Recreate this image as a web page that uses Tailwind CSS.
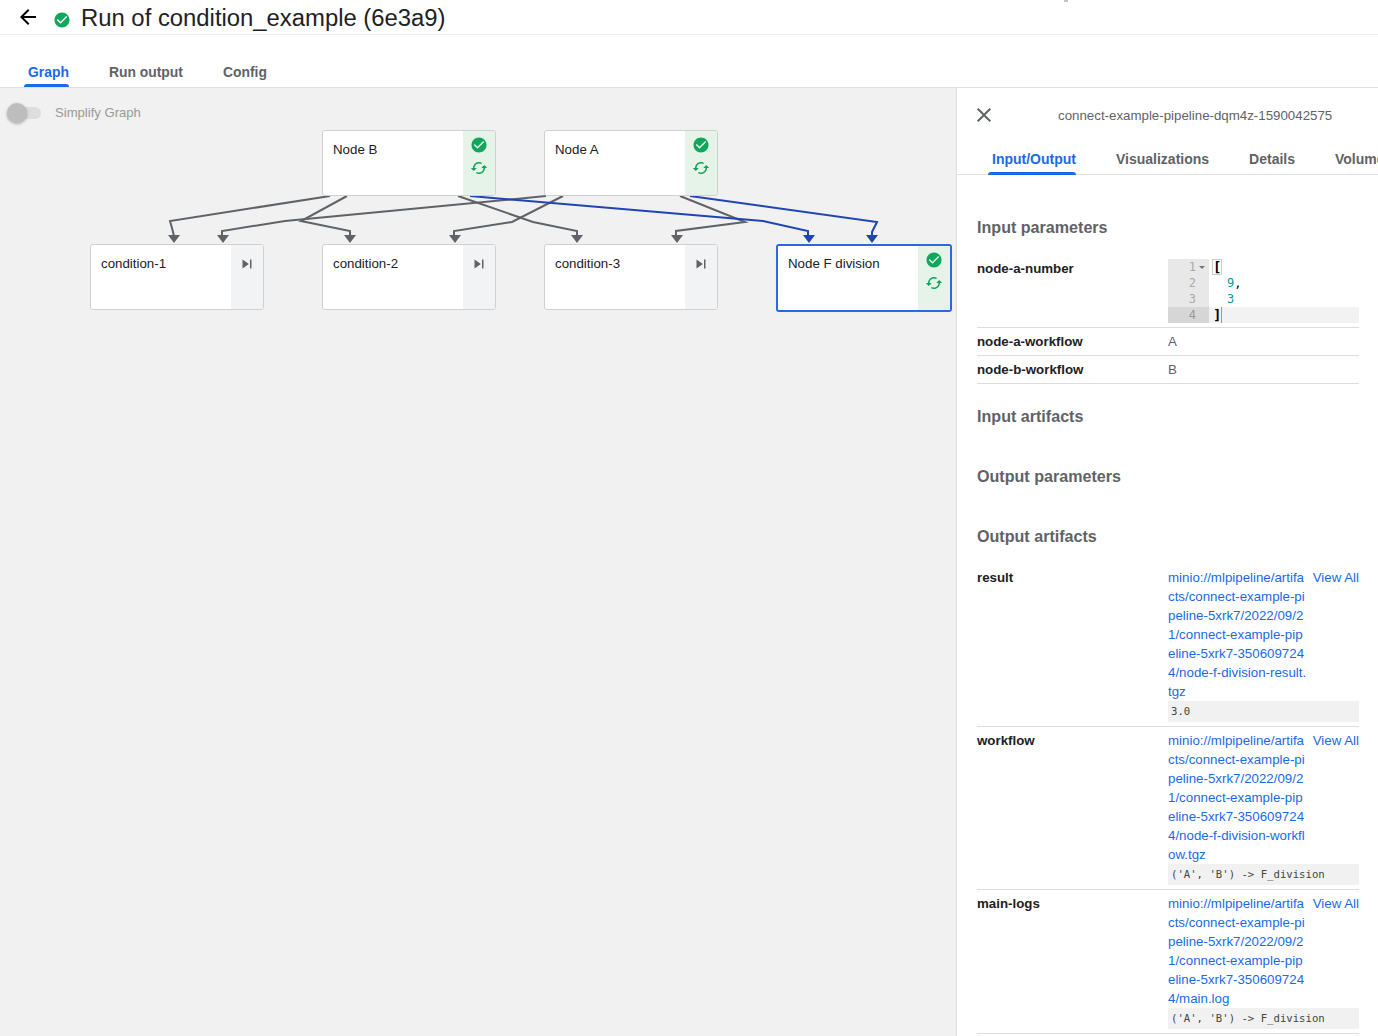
<!DOCTYPE html>
<html lang="en">

<head>
  <meta charset="UTF-8" />
  <title>Run of condition_example (6e3a9)</title>
  <script src="https://cdn.jsdelivr.net/npm/@tailwindcss/browser@4"></script>
</head>

<body class="relative h-[1036px] overflow-hidden bg-white font-['Liberation_Sans',Arial,sans-serif] text-[13.3px] text-[#202124]">

  <!-- sliver of something cut off by the top of the window -->
  <span class="absolute left-[1064px] top-0 h-[2px] w-1 bg-[#c4c4c4]"></span>

  <!-- page title -->
  <div class="flex h-[35px] items-center border-b border-[#eeeeee]">
    <svg class="ml-4 h-6 w-6 text-black" viewBox="0 0 24 24" fill="currentColor"><path d="M20 11H7.83l5.59-5.59L12 4l-8 8 8 8 1.41-1.41L7.83 13H20v-2z"/></svg>
    <svg class="ml-[13px] mt-[5px] h-[18px] w-[18px] text-[#10a65b]" viewBox="0 0 24 24" fill="currentColor"><path d="M12 2C6.48 2 2 6.48 2 12s4.48 10 10 10 10-4.48 10-10S17.52 2 12 2zm-2 15l-5-5 1.41-1.41L10 14.17l7.59-7.59L19 8l-9 9z"/></svg>
    <h1 class="ml-[10px] mt-[2px] text-[23.85px] leading-8">Run of condition_example (6e3a9)</h1>
  </div>

  <!-- main tabs -->
  <div class="flex h-[53px] items-end gap-10 border-b border-[#e0e0e0] pb-[7px] pl-7 text-[13.9px] font-bold leading-4 text-[#5f6368]">
    <div class="relative text-[#1a6ae8]">Graph<span class="absolute -bottom-[7px] -left-1 right-0 h-[3px] rounded-t-[3px] bg-[#1a6ae8]"></span></div>
    <div>Run output</div>
    <div>Config</div>
  </div>

  <div class="flex h-[948px]">
    <!-- graph canvas -->
    <div class="relative w-[956px] overflow-hidden bg-[#f1f1f1]">
      <div class="flex h-[50px] items-center pb-[1px]">
        <div class="relative ml-[17px] h-[12px] w-[24px] rounded-full bg-[#dddddd]">
          <span class="absolute -left-[10px] -top-[4px] h-5 w-5 rounded-full bg-[#bdbdbd] shadow-[0_1px_3px_rgba(0,0,0,0.3)]"></span>
        </div>
        <span class="ml-[14px] text-[13.1px] text-[#999999]">Simplify Graph</span>
      </div>

      <svg class="absolute left-0 top-0" width="956" height="948" viewBox="0 88 956 948" fill="none" stroke-width="2">
        <g stroke="#5f6368">
          <path d="M330 196L170 221L172 228L174 236"/>
          <path d="M347 196L301 221L350 231V236"/>
          <path d="M546 196L285 221L222 231V236"/>
          <path d="M458 196L533 222L577 231V236"/>
          <path d="M563 196L512 222L454 231V236"/>
          <path d="M680 196L745 222L676 231V236"/>
        </g>
        <g fill="#5f6368">
          <path d="M168 235H180L174 243Z"/>
          <path d="M217 235H229L223 243Z"/>
          <path d="M344 235H356L350 243Z"/>
          <path d="M449 235H461L455 243Z"/>
          <path d="M571 235H583L577 243Z"/>
          <path d="M671 235H683L677 243Z"/>
        </g>
        <g stroke="#1f45b5">
          <path d="M470 196L763 221L808 231V236"/>
          <path d="M690 196L877 222L872 232V236"/>
        </g>
        <g fill="#1f45b5">
          <path d="M803 235H815L809 243Z"/>
          <path d="M866 235H878L872 243Z"/>
        </g>
      </svg>

      <!-- nodes -->
      <div class="absolute left-[322px] top-[42px] flex h-[66px] w-[174px] overflow-hidden rounded-[3px] border border-[#d0d0d0] bg-white">
        <div class="flex-1 pl-[10px] pt-[11px] leading-4">Node B</div>
        <div class="flex w-8 flex-col items-center gap-[5px] bg-[#e5f3e9] pt-[5px] text-[#10a65b]">
          <svg class="h-[18px] w-[18px]" viewBox="0 0 24 24" fill="currentColor"><path d="M12 2C6.48 2 2 6.48 2 12s4.48 10 10 10 10-4.48 10-10S17.52 2 12 2zm-2 15l-5-5 1.41-1.41L10 14.17l7.59-7.59L19 8l-9 9z"/></svg>
          <svg class="h-[18px] w-[18px]" viewBox="0 0 24 24" fill="currentColor"><path d="M19 8l-4 4h3c0 3.31-2.69 6-6 6-1.01 0-1.97-.25-2.8-.7l-1.46 1.46C8.97 19.54 10.43 20 12 20c4.42 0 8-3.58 8-8h3l-4-4zM6 12c0-3.31 2.69-6 6-6 1.01 0 1.97.25 2.8.7l1.46-1.46C15.03 4.46 13.57 4 12 4c-4.42 0-8 3.58-8 8H1l4 4 4-4H6z"/></svg>
        </div>
      </div>
      <div class="absolute left-[544px] top-[42px] flex h-[66px] w-[174px] overflow-hidden rounded-[3px] border border-[#d0d0d0] bg-white">
        <div class="flex-1 pl-[10px] pt-[11px] leading-4">Node A</div>
        <div class="flex w-8 flex-col items-center gap-[5px] bg-[#e5f3e9] pt-[5px] text-[#10a65b]">
          <svg class="h-[18px] w-[18px]" viewBox="0 0 24 24" fill="currentColor"><path d="M12 2C6.48 2 2 6.48 2 12s4.48 10 10 10 10-4.48 10-10S17.52 2 12 2zm-2 15l-5-5 1.41-1.41L10 14.17l7.59-7.59L19 8l-9 9z"/></svg>
          <svg class="h-[18px] w-[18px]" viewBox="0 0 24 24" fill="currentColor"><path d="M19 8l-4 4h3c0 3.31-2.69 6-6 6-1.01 0-1.97-.25-2.8-.7l-1.46 1.46C8.97 19.54 10.43 20 12 20c4.42 0 8-3.58 8-8h3l-4-4zM6 12c0-3.31 2.69-6 6-6 1.01 0 1.97.25 2.8.7l1.46-1.46C15.03 4.46 13.57 4 12 4c-4.42 0-8 3.58-8 8H1l4 4 4-4H6z"/></svg>
        </div>
      </div>
      <div class="absolute left-[90px] top-[156px] flex h-[66px] w-[174px] overflow-hidden rounded-[3px] border border-[#d0d0d0] bg-white">
        <div class="flex-1 pl-[10px] pt-[11px] leading-4">condition-1</div>
        <div class="flex w-8 justify-center bg-[#f1f3f4] pt-[10px] text-[#5f6368]">
          <svg class="h-[18px] w-[18px]" viewBox="0 0 24 24" fill="currentColor"><path d="M6 18l8.5-6L6 6v12zM16 6v12h2V6h-2z"/></svg>
        </div>
      </div>
      <div class="absolute left-[322px] top-[156px] flex h-[66px] w-[174px] overflow-hidden rounded-[3px] border border-[#d0d0d0] bg-white">
        <div class="flex-1 pl-[10px] pt-[11px] leading-4">condition-2</div>
        <div class="flex w-8 justify-center bg-[#f1f3f4] pt-[10px] text-[#5f6368]">
          <svg class="h-[18px] w-[18px]" viewBox="0 0 24 24" fill="currentColor"><path d="M6 18l8.5-6L6 6v12zM16 6v12h2V6h-2z"/></svg>
        </div>
      </div>
      <div class="absolute left-[544px] top-[156px] flex h-[66px] w-[174px] overflow-hidden rounded-[3px] border border-[#d0d0d0] bg-white">
        <div class="flex-1 pl-[10px] pt-[11px] leading-4">condition-3</div>
        <div class="flex w-8 justify-center bg-[#f1f3f4] pt-[10px] text-[#5f6368]">
          <svg class="h-[18px] w-[18px]" viewBox="0 0 24 24" fill="currentColor"><path d="M6 18l8.5-6L6 6v12zM16 6v12h2V6h-2z"/></svg>
        </div>
      </div>
      <div class="absolute left-[776px] top-[156px] flex h-[68px] w-[176px] overflow-hidden rounded-[3px] border-2 border-[#2a6ae0] bg-white">
        <div class="flex-1 pl-[10px] pt-[10px] leading-4">Node F division</div>
        <div class="flex w-8 flex-col items-center gap-[5px] bg-[#e5f3e9] pt-[5px] text-[#10a65b]">
          <svg class="h-[18px] w-[18px]" viewBox="0 0 24 24" fill="currentColor"><path d="M12 2C6.48 2 2 6.48 2 12s4.48 10 10 10 10-4.48 10-10S17.52 2 12 2zm-2 15l-5-5 1.41-1.41L10 14.17l7.59-7.59L19 8l-9 9z"/></svg>
          <svg class="h-[18px] w-[18px]" viewBox="0 0 24 24" fill="currentColor"><path d="M19 8l-4 4h3c0 3.31-2.69 6-6 6-1.01 0-1.97-.25-2.8-.7l-1.46 1.46C8.97 19.54 10.43 20 12 20c4.42 0 8-3.58 8-8h3l-4-4zM6 12c0-3.31 2.69-6 6-6 1.01 0 1.97.25 2.8.7l1.46-1.46C15.03 4.46 13.57 4 12 4c-4.42 0-8 3.58-8 8H1l4 4 4-4H6z"/></svg>
        </div>
      </div>
    </div>

    <!-- side panel -->
    <div class="w-[422px] overflow-hidden border-l border-[#dddddd] bg-white">
      <div class="flex h-[54px] items-center pl-[15px]">
        <svg class="h-6 w-6 text-[#5f6368]" viewBox="0 0 24 24" fill="currentColor"><path d="M19 6.41L17.59 5 12 10.59 6.41 5 5 6.41 10.59 12 5 17.59 6.41 19 12 13.41 17.59 19 19 17.59 13.41 12z"/></svg>
        <div class="ml-[62px] mt-[1px] text-[#5f6368]">connect-example-pipeline-dqm4z-1590042575</div>
      </div>
      <div class="flex h-[33px] gap-10 whitespace-nowrap border-b border-[#e0e0e0] pl-[35px] pt-[9px] text-[14px] font-bold leading-4 text-[#5f6368]">
        <div class="relative h-6 text-[#1a6ae8]">Input/Output<span class="absolute -left-1 bottom-0 right-0 h-[3px] rounded-t-[3px] bg-[#1a6ae8]"></span></div>
        <div>Visualizations</div>
        <div>Details</div>
        <div>Volumes</div>
      </div>

      <div class="w-[402px] pl-5 pr-0 pt-10 leading-[19px]">
        <h2 class="h-6 text-[16.1px] font-bold leading-6 text-[#5f6368]">Input parameters</h2>
        <div class="mt-4 w-[382px]">
          <div class="flex border-b border-[#dddddd] py-1">
            <div class="w-[191px] font-bold">node-a-number</div>
            <div class="w-[191px] font-['DejaVu_Sans_Mono',monospace] text-[12px] leading-4">
              <div class="flex h-4">
                <div class="flex w-[41px] justify-end bg-[#e8e8e8] pr-[4px] text-[#aaaaaa]">1<span class="ml-[3px] mt-[7px] h-0 w-0 border-x-[3px] border-t-[3px] border-x-transparent border-t-[#777777]"></span></div>
                <div class="ml-[3px] h-4 border border-[#cccccc] text-[14px] font-bold leading-[14px] text-black">[</div>
              </div>
              <div class="flex h-4">
                <div class="w-[41px] bg-[#e8e8e8] pr-[13px] text-right text-[#aaaaaa]">2</div>
                <div class="pl-1 text-black"><span class="pl-[14px] text-[#009a9a]">9</span>,</div>
              </div>
              <div class="flex h-4">
                <div class="w-[41px] bg-[#e8e8e8] pr-[13px] text-right text-[#aaaaaa]">3</div>
                <div class="pl-1"><span class="pl-[14px] text-[#009a9a]">3</span></div>
              </div>
              <div class="flex h-4 bg-[#f2f2f2]">
                <div class="w-[41px] bg-[#d6d6d6] pr-[13px] text-right text-[#999999]">4</div>
                <div class="border-r border-[#999999] pl-1 text-[14px] font-bold leading-4 text-black">]</div>
              </div>
            </div>
          </div>
          <div class="flex border-b border-[#dddddd] py-1">
            <div class="w-[191px] font-bold">node-a-workflow</div>
            <div class="w-[191px] text-[#5f6368]">A</div>
          </div>
          <div class="flex border-b border-[#dddddd] py-1">
            <div class="w-[191px] font-bold">node-b-workflow</div>
            <div class="w-[191px] text-[#5f6368]">B</div>
          </div>
        </div>

        <h2 class="mt-5 h-6 text-[16.1px] font-bold leading-6 text-[#5f6368]">Input artifacts</h2>
        <h2 class="mt-9 h-6 text-[16.1px] font-bold leading-6 text-[#5f6368]">Output parameters</h2>
        <h2 class="mt-9 h-6 text-[16.1px] font-bold leading-6 text-[#5f6368]">Output artifacts</h2>

        <div class="mt-4 w-[382px]">
          <div class="flex border-b border-[#dddddd] py-1">
            <div class="w-[191px] font-bold">result</div>
            <div class="w-[191px]">
              <div class="flex justify-between text-[#1a6ae8]">
                <div class="whitespace-nowrap">minio://mlpipeline/artifa<br>cts/connect-example-pi<br>peline-5xrk7/2022/09/2<br>1/connect-example-pip<br>eline-5xrk7-350609724<br>4/node-f-division-result.<br>tgz</div>
                <div class="whitespace-nowrap">View All</div>
              </div>
              <div class="h-[21px] bg-[#f1f1f1] px-[3px] font-['DejaVu_Sans_Mono',monospace] text-[10.65px] leading-[21px] text-[#444444]">3.0</div>
            </div>
          </div>
          <div class="flex border-b border-[#dddddd] py-1">
            <div class="w-[191px] font-bold">workflow</div>
            <div class="w-[191px]">
              <div class="flex justify-between text-[#1a6ae8]">
                <div class="whitespace-nowrap">minio://mlpipeline/artifa<br>cts/connect-example-pi<br>peline-5xrk7/2022/09/2<br>1/connect-example-pip<br>eline-5xrk7-350609724<br>4/node-f-division-workfl<br>ow.tgz</div>
                <div class="whitespace-nowrap">View All</div>
              </div>
              <div class="h-[21px] bg-[#f1f1f1] px-[3px] font-['DejaVu_Sans_Mono',monospace] text-[10.65px] leading-[21px] text-[#444444]">('A', 'B') -&gt; F_division</div>
            </div>
          </div>
          <div class="flex border-b border-[#dddddd] py-1">
            <div class="w-[191px] font-bold">main-logs</div>
            <div class="w-[191px]">
              <div class="flex justify-between text-[#1a6ae8]">
                <div class="whitespace-nowrap">minio://mlpipeline/artifa<br>cts/connect-example-pi<br>peline-5xrk7/2022/09/2<br>1/connect-example-pip<br>eline-5xrk7-350609724<br>4/main.log</div>
                <div class="whitespace-nowrap">View All</div>
              </div>
              <div class="h-[21px] bg-[#f1f1f1] px-[3px] font-['DejaVu_Sans_Mono',monospace] text-[10.65px] leading-[21px] text-[#444444]">('A', 'B') -&gt; F_division</div>
            </div>
          </div>
        </div>
      </div>
    </div>
  </div>

</body>

</html>
